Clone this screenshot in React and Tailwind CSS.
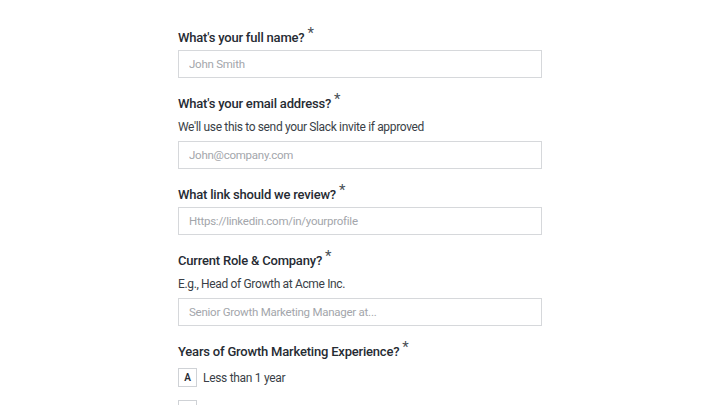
import React from 'react'

const FIELDS = [
  { label: "What's your full name?", placeholder: 'John Smith' },
  {
    label: "What's your email address?",
    help: "We'll use this to send your Slack invite if approved",
    placeholder: 'John@company.com'
  },
  { label: 'What link should we review?', placeholder: 'Https://linkedin.com/in/yourprofile' },
  {
    label: 'Current Role & Company?',
    help: 'E.g., Head of Growth at Acme Inc.',
    placeholder: 'Senior Growth Marketing Manager at...'
  }
]

function Label({ children }) {
  return (
    <div className="h-[18px] text-[13px] font-medium leading-[18px] tracking-[-0.2px] text-[#262b33]">
      {children}
      <span className="relative -top-[4px] ml-[3px] text-[15px] font-normal text-[#4a4f57]">*</span>
    </div>
  )
}

function Field({ field }) {
  return (
    <div className="flex flex-col">
      <Label>{field.label}</Label>
      {field.help && (
        <div className="mt-[6px] h-[18px] text-[12px] leading-[18px] tracking-[-0.35px] text-[#3a3f47]">
          {field.help}
        </div>
      )}
      <input
        className={`${field.help ? 'mt-[5px]' : 'mt-[4px]'} h-[28px] w-[364px] border border-[#d6d8db] bg-white px-[10px] text-[11.5px] tracking-[-0.25px] text-[#262b33] outline-none placeholder:text-[#a3a6ab]`}
        placeholder={field.placeholder}
      />
    </div>
  )
}

export default function App() {
  return (
    <div
      className="h-[405px] w-[720px] overflow-hidden bg-white"
      style={{ fontFamily: 'Roboto, "Noto Sans", sans-serif' }}
    >
      <div className="ml-[178px] flex flex-col gap-[16px] pt-[28px]">
        {FIELDS.map((f) => (
          <Field key={f.label} field={f} />
        ))}
        <div className="flex flex-col">
          <Label>Years of Growth Marketing Experience?</Label>
          <div className="mt-[8px] flex flex-col gap-[13px]">
            <div className="flex items-center gap-[6px]">
              <span className="flex h-[19px] w-[19px] items-center justify-center border border-[#cfd2d6] text-[10px] font-semibold text-[#262b33]">
                A
              </span>
              <span className="text-[12px] tracking-[-0.3px] text-[#3a3f47]">Less than 1 year</span>
            </div>
            <div className="flex items-center gap-[6px]">
              <span className="h-[19px] w-[19px] border border-[#cfd2d6]" />
            </div>
          </div>
        </div>
      </div>
    </div>
  )
}
